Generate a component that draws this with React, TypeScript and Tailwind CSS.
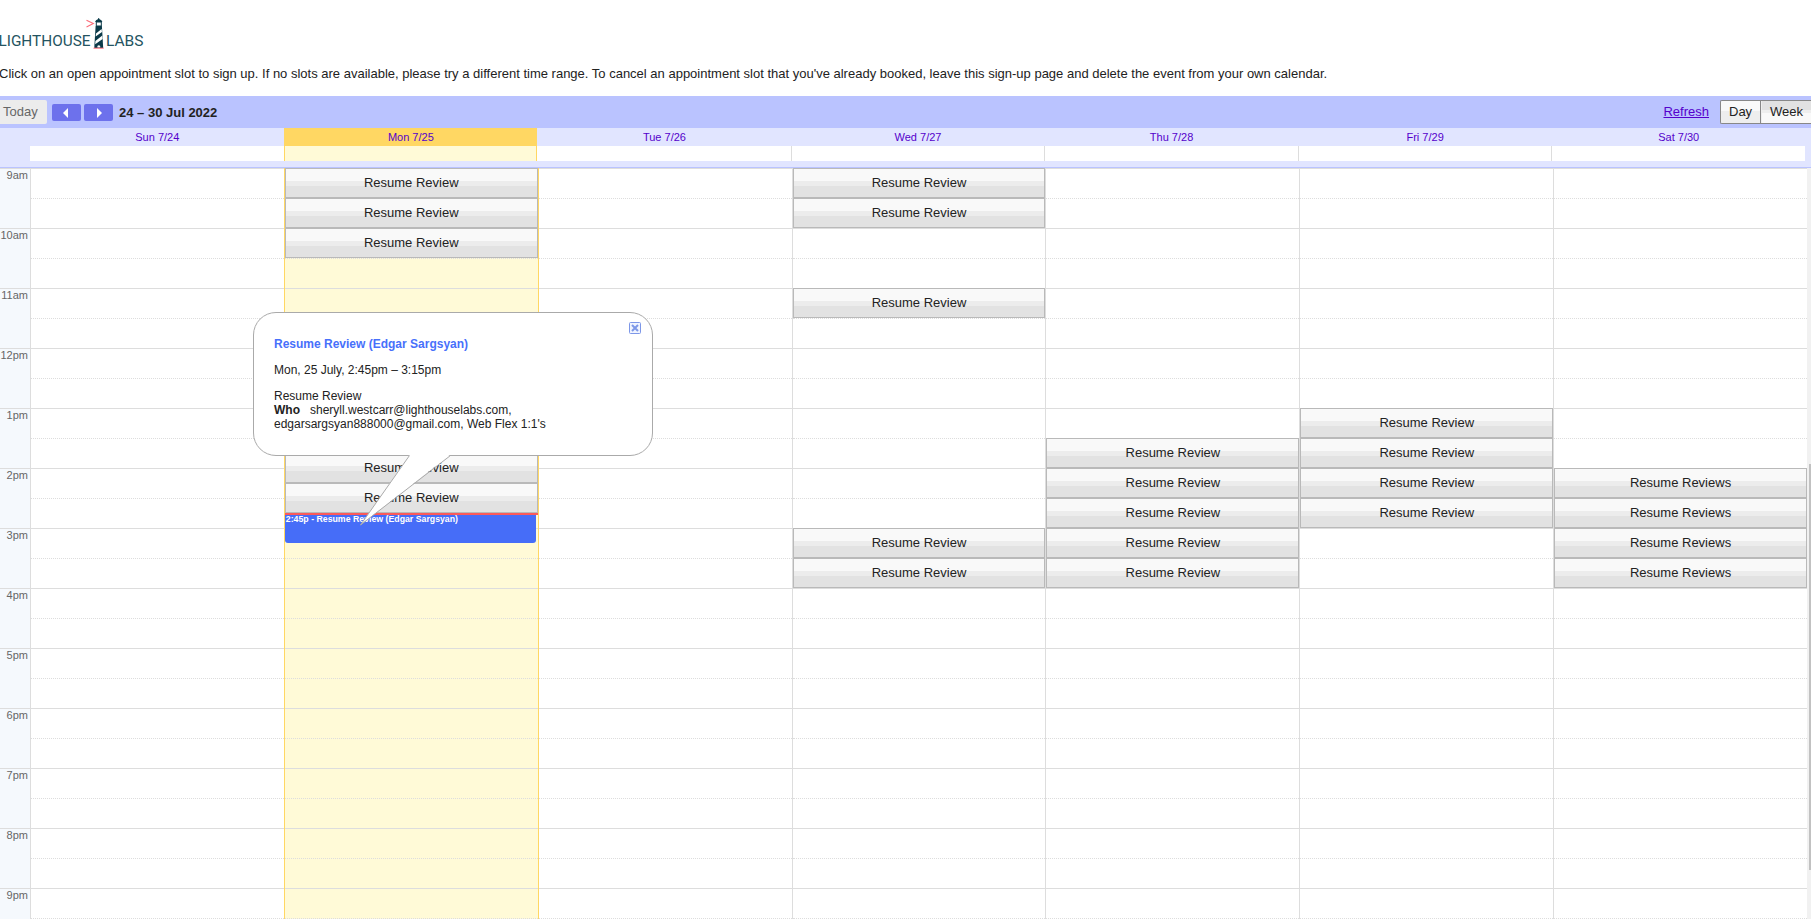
import React from "react";

const HOURS = ["9am", "10am", "11am", "12pm", "1pm", "2pm", "3pm", "4pm", "5pm", "6pm", "7pm", "8pm", "9pm"];
const HALF_HOURS = Array.from({ length: 26 }, (_, i) => i);

type Day = { label: string; today?: boolean; slots: number[]; title: string };

const DAYS: Day[] = [
  { label: "Sun 7/24", slots: [], title: "" },
  { label: "Mon 7/25", today: true, slots: [0, 1, 2, 9.5, 10.5], title: "Resume Review" },
  { label: "Tue 7/26", slots: [], title: "" },
  { label: "Wed 7/27", slots: [0, 1, 4, 12, 13], title: "Resume Review" },
  { label: "Thu 7/28", slots: [9, 10, 11, 12, 13], title: "Resume Review" },
  { label: "Fri 7/29", slots: [8, 9, 10, 11], title: "Resume Review" },
  { label: "Sat 7/30", slots: [10, 11, 12, 13], title: "Resume Reviews" },
];

function Logo() {
  return (
    <svg className="block" width="150" height="36" viewBox="0 0 150 36" aria-label="Lighthouse Labs">
      <g fill="#245461" fontFamily="Roboto, sans-serif" fontSize="15.4">
        <text x="-1.5" y="28.6" textLength="92" lengthAdjust="spacingAndGlyphs">LIGHTHOUSE</text>
        <text x="106" y="28.6" textLength="37.5" lengthAdjust="spacingAndGlyphs">LABS</text>
      </g>
      <path d="M86.5 3.2 L93.3 6.6 L86.5 10" fill="none" stroke="#fb6b78" strokeWidth="1.1" />
      <path d="M95 5 Q95.5 2.8 98.2 2 V1 H99.2 V2 Q102 2.8 102.4 5 Z" fill="#0b3a49" />
      <path d="M96.3 5 H101.3 V9 H96.3 Z" fill="#fff" stroke="#0b3a49" strokeWidth="1" />
      <path d="M95.6 9 H101.9 L103.2 31 H94.3 Z" fill="#0b3a49" />
      <path d="M96 16.5 L101.6 12 L102 15 L95.6 19.4 Z M95.4 24 L102.3 18.6 L102.6 22 L95.2 27.2 Z" fill="#fff" />
      <path d="M97.4 30.5 V29 Q98.8 27.5 100.2 29 V30.5 Z" fill="#fff" />
      <path d="M93.5 31.2 H103.7" stroke="#fb6b78" strokeWidth="1" />
    </svg>
  );
}

function Toolbar() {
  return (
    <div className="flex h-8 items-start bg-[#bac3ff]">
      <div className="mt-1 h-6 w-[47px] rounded-r-[2px] bg-[#ececec] pl-[3px] text-[13px] leading-[23px] text-[#666]">Today</div>
      <button className="mt-2 ml-[5px] flex h-[17px] w-[29px] items-center justify-center rounded-[2px] bg-[#6d71ec]">
        <svg className="-ml-0.5" width="5" height="10" viewBox="0 0 5 10"><path d="M5 0 V10 L0 5 Z" fill="#fff" /></svg>
      </button>
      <button className="mt-2 ml-[3px] flex h-[17px] w-[29px] items-center justify-center rounded-[2px] bg-[#6d71ec]">
        <svg className="ml-0.5" width="5" height="10" viewBox="0 0 5 10"><path d="M0 0 V10 L5 5 Z" fill="#fff" /></svg>
      </button>
      <div className="ml-1.5 text-[13px] leading-[33px] font-bold text-[#222]">24 – 30 Jul 2022</div>
      <a className="mr-[11px] ml-auto text-[13px] leading-[32px] text-[#5500cc] underline">Refresh</a>
      <div className="mt-1 flex h-6 w-[91px] overflow-hidden rounded-l-[2px] border-y border-l border-[#888] text-[13px] leading-[22px] text-[#222]">
        <div className="w-[40px] border-r border-[#888] bg-[linear-gradient(#f9f9f9_0_10px,#eeeeee_10px)] pl-2">Day</div>
        <div className="flex-1 border-l border-[#eee] bg-[linear-gradient(#e2e2e2_0_9px,#eeeeee_9px_12px,#f9f9f9_12px)] pl-2">Week</div>
      </div>
    </div>
  );
}

function DayHeader() {
  return (
    <div className="h-10 border-b border-[#bac3ff] bg-[#e1e5ff]">
      <div className="mr-1.5 ml-[30px] grid grid-cols-7">
        {DAYS.map((d, i) => (
          <div key={d.label}>
            <div className={`h-[18px] pl-px text-center text-[11px] leading-[18px] text-[#5500cc] ${d.today ? "bg-[#ffd763]" : ""}`}>{d.label}</div>
            <div
              className={`h-[15px] ${
                d.today ? "border-x border-[#ffd763] bg-[#fffad7]" : i > 2 ? "border-l border-[#ddd] bg-white" : "bg-white"
              }`}
            />
          </div>
        ))}
      </div>
    </div>
  );
}

function Slot({ at, title }: { at: number; title: string }) {
  return (
    <div
      className="absolute inset-x-0 h-[30px] border border-[#b9b9b9] bg-[linear-gradient(#f9f9f9_0_12px,#ececec_12px_17px,#e2e2e2_17px)] text-center text-[13px] leading-[27px] text-[#222]"
      style={{ top: at * 30 }}
    >
      {title}
    </div>
  );
}

function Bubble() {
  return (
    <div className="absolute top-[144px] left-[253px] h-[144px] w-[400px] rounded-[23px] border border-[#aaa] bg-white pt-6 pl-5 text-[12px] leading-[14px] text-[#222]">
      <svg className="absolute top-[9px] left-[375px]" width="12" height="12" viewBox="0 0 12 12">
        <rect x="0.5" y="0.5" width="11" height="11" rx="1" fill="#f0f4ff" stroke="#7d97e8" />
        <path d="M3 3 L9 9 M9 3 L3 9" stroke="#7d97e8" strokeWidth="2" />
      </svg>
      <div className="leading-[15px] font-bold text-[#4770fb]">Resume Review (Edgar Sargsyan)</div>
      <div className="mt-[11px] leading-[15px]">Mon, 25 July, 2:45pm – 3:15pm</div>
      <div className="mt-[11px]">Resume Review</div>
      <div><b>Who</b><span className="ml-2.5">sheryll.westcarr@lighthouselabs.com,</span></div>
      <div>edgarsargsyan888000@gmail.com, Web Flex 1:1's</div>
      <svg className="absolute top-[141px] left-[106px]" width="92" height="72" viewBox="0 0 92 72">
        <path d="M50 0 L0.5 71 L91 0 Z" fill="#fff" />
        <path d="M49.5 1.5 L0.5 71 L90.5 1.5" fill="none" stroke="#aaa" />
      </svg>
    </div>
  );
}

export default function App() {
  return (
    <div className="flex h-[919px] w-full flex-col overflow-hidden bg-white font-['Liberation_Sans',Arial,sans-serif]">
      <header className="h-24 pt-[17px]">
        <Logo />
        <p className="mt-3 text-[13px] leading-[18px] whitespace-nowrap text-[#222]">
          <span className="-ml-px">
            Click on an open appointment slot to sign up. If no slots are available, please try a different time range. To cancel an
            appointment slot that you've already booked, leave this sign-up page and delete the event from your own calendar.
          </span>
        </p>
      </header>
      <Toolbar />
      <DayHeader />
      <div className="flex flex-1 overflow-hidden">
        <div className="relative flex h-[751px] flex-1 overflow-hidden">
          <div className="w-[30px] shrink-0 bg-[#f5f9fd]">
            {HOURS.map((h) => (
              <div key={h} className="h-[60px] border-t border-[#ddd] pr-0.5 text-right text-[11px] leading-[13px] text-[#666]">{h}</div>
            ))}
          </div>
          <div className="grid flex-1 grid-cols-7">
            {DAYS.map((d, i) => (
              <div
                key={d.label}
                className={`relative border-l ${d.today || i === 2 ? "border-[#ffd763]" : "border-[#ddd]"} ${d.today ? "bg-[#fffad7]" : ""}`}
              >
                {HALF_HOURS.map((n) => (
                  <div key={n} className={`h-[30px] border-t border-[#ddd] ${n % 2 ? "border-dotted" : ""}`} />
                ))}
                {d.slots.map((s) => (
                  <Slot key={s} at={s} title={d.title} />
                ))}
                {d.today && (
                  <>
                    <div className="absolute top-[346px] right-0.5 left-0 h-[29px] rounded-b-[3px] bg-[#466df8] pl-px text-[8.75px] leading-[11px] font-bold whitespace-nowrap text-white">
                      2:45p - Resume Review (Edgar Sargsyan)
                    </div>
                    <div className="absolute inset-x-0 top-[345px] h-0.5 bg-[#fb5a5a]" />
                  </>
                )}
              </div>
            ))}
          </div>
          <Bubble />
        </div>
        <div className="w-1 bg-[#f1f1f1] pt-[296px] pl-0.5">
          <div className="h-[406px] bg-[#c1c1c1]" />
        </div>
      </div>
    </div>
  );
}
